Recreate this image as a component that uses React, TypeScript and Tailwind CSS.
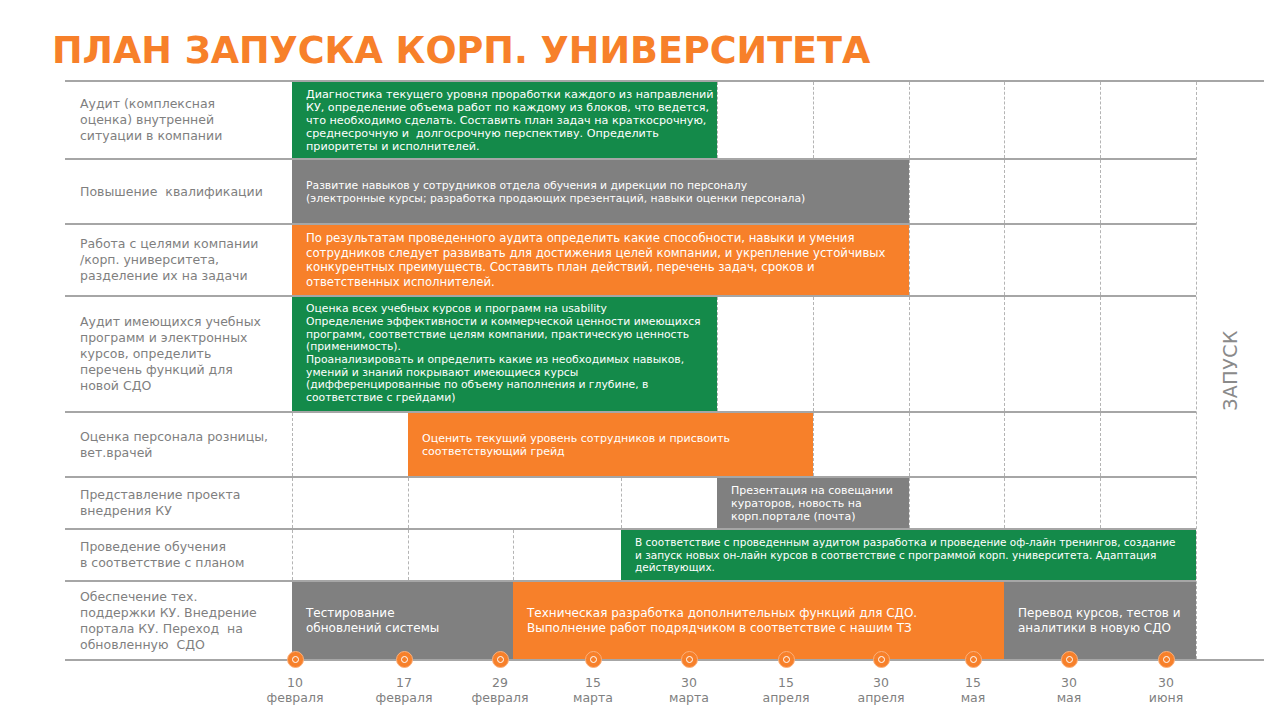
import React from 'react';

type Bar = {
  col: string;
  bg: string;
  text: string[];
  pad: string;
  size: string;
};

type Row = {
  h: string;
  label: string[];
  bars: Bar[];
  skip?: number[];
};

const GREEN = 'bg-[#148a4a]';
const ORANGE = 'bg-[#f7802a]';
const GRAY = 'bg-[#808080]';

const SMALL = 'text-[11px] leading-[13px]';
const MID = 'text-[11.7px] leading-[14.5px]';
const BIG = 'text-[12px] leading-[15px]';

const rows: Row[] = [
  {
    h: 'h-[78px]',
    label: ['Аудит (комплексная', 'оценка) внутренней', 'ситуации в компании'],
    bars: [
      {
        col: 'col-start-1 col-end-5',
        bg: GREEN,
        pad: 'pl-[14px]',
        size: 'text-[11.2px] leading-[13px]',
        text: [
          'Диагностика текущего уровня проработки каждого из направлений',
          'КУ, определение объема работ по каждому из блоков, что ведется,',
          'что необходимо сделать. Составить план задач на краткосрочную,',
          'среднесрочную и  долгосрочную перспективу. Определить',
          'приоритеты и исполнителей.',
        ],
      },
    ],
  },
  {
    h: 'h-[65px]',
    label: ['Повышение  квалификации'],
    bars: [
      {
        col: 'col-start-1 col-end-7',
        bg: GRAY,
        pad: 'pl-[14px]',
        size: 'text-[10.8px] leading-[13px]',
        text: [
          'Развитие навыков у сотрудников отдела обучения и дирекции по персоналу',
          '(электронные курсы; разработка продающих презентаций, навыки оценки персонала)',
        ],
      },
    ],
  },
  {
    h: 'h-[72px]',
    label: ['Работа с целями компании', '/корп. университета,', 'разделение их на задачи'],
    bars: [
      {
        col: 'col-start-1 col-end-7',
        bg: ORANGE,
        pad: 'pl-[14px]',
        size: MID,
        text: [
          'По результатам проведенного аудита определить какие способности, навыки и умения',
          'сотрудников следует развивать для достижения целей компании, и укрепление устойчивых',
          'конкурентных преимуществ. Составить план действий, перечень задач, сроков и',
          'ответственных исполнителей.',
        ],
      },
    ],
  },
  {
    h: 'h-[116px]',
    label: [
      'Аудит имеющихся учебных',
      'программ и электронных',
      'курсов, определить',
      'перечень функций для',
      'новой СДО',
    ],
    bars: [
      {
        col: 'col-start-1 col-end-5',
        bg: GREEN,
        pad: 'pl-[14px]',
        size: 'text-[10.8px] leading-[12.7px]',
        text: [
          'Оценка всех учебных курсов и программ на usability',
          'Определение эффективности и коммерческой ценности имеющихся',
          'программ, соответствие целям компании, практическую ценность',
          '(применимость).',
          'Проанализировать и определить какие из необходимых навыков,',
          'умений и знаний покрывают имеющиеся курсы',
          '(дифференцированные по объему наполнения и глубине, в',
          'соответствие с грейдами)',
        ],
      },
    ],
  },
  {
    h: 'h-[65px]',
    label: ['Оценка персонала розницы,', 'вет.врачей'],
    bars: [
      {
        col: 'col-start-2 col-end-6',
        bg: ORANGE,
        pad: 'pl-[14px]',
        size: SMALL,
        text: ['Оценить текущий уровень сотрудников и присвоить', 'соответствующий грейд'],
      },
    ],
  },
  {
    h: 'h-[52px]',
    label: ['Представление проекта', 'внедрения КУ'],
    skip: [3],
    bars: [
      {
        col: 'col-start-5 col-end-7',
        bg: GRAY,
        pad: 'pl-[14px]',
        size: SMALL,
        text: ['Презентация на совещании', 'кураторов, новость на', 'корп.портале (почта)'],
      },
    ],
  },
  {
    h: 'h-[52px]',
    label: ['Проведение обучения', 'в соответствие с планом'],
    bars: [
      {
        col: 'col-start-4 col-end-10',
        bg: GREEN,
        pad: 'pl-[14px]',
        size: 'text-[10.5px] leading-[12.5px]',
        text: [
          'В соответствие с проведенным аудитом разработка и проведение оф-лайн тренингов, создание',
          'и запуск новых он-лайн курсов в соответствие с программой корп. университета. Адаптация',
          'действующих.',
        ],
      },
    ],
  },
  {
    h: 'h-[79px]',
    label: ['Обеспечение тех.', 'поддержки КУ. Внедрение', 'портала КУ. Переход  на', 'обновленную  СДО'],
    bars: [
      {
        col: 'col-start-1 col-end-3',
        bg: GRAY,
        pad: 'pl-[14px]',
        size: BIG,
        text: ['Тестирование', 'обновлений системы'],
      },
      {
        col: 'col-start-3 col-end-8',
        bg: ORANGE,
        pad: 'pl-[14px]',
        size: BIG,
        text: [
          'Техническая разработка дополнительных функций для СДО.',
          'Выполнение работ подрядчиком в соответствие с нашим ТЗ',
        ],
      },
      {
        col: 'col-start-8 col-end-10',
        bg: GRAY,
        pad: 'pl-[14px]',
        size: BIG,
        text: ['Перевод курсов, тестов и', 'аналитики в новую СДО'],
      },
    ],
  },
];

const cells = [
  'col-start-1',
  'col-start-2',
  'col-start-3',
  'col-start-4',
  'col-start-5',
  'col-start-6',
  'col-start-7',
  'col-start-8',
  'col-start-9',
];

const dates = [
  { ml: 'ml-[260px]', day: '10', month: 'февраля' },
  { ml: 'ml-[39px]', day: '17', month: 'февраля' },
  { ml: 'ml-[26px]', day: '29', month: 'февраля' },
  { ml: 'ml-[23px]', day: '15', month: 'марта' },
  { ml: 'ml-[26px]', day: '30', month: 'марта' },
  { ml: 'ml-[27px]', day: '15', month: 'апреля' },
  { ml: 'ml-[25px]', day: '30', month: 'апреля' },
  { ml: 'ml-[22px]', day: '15', month: 'мая' },
  { ml: 'ml-[26px]', day: '30', month: 'мая' },
  { ml: 'ml-[27px]', day: '30', month: 'июня' },
];

export default function App() {
  return (
    <div className="w-[1280px] h-[720px] bg-white overflow-hidden font-['DejaVu_Sans',sans-serif]">
      {/* Title */}
      <div className="h-[80px] pt-[33px] pl-[52px]">
        <h1 className="text-[36.6px] leading-none font-bold text-[#f7802a] whitespace-nowrap">
          ПЛАН ЗАПУСКА КОРП. УНИВЕРСИТЕТА
        </h1>
      </div>

      {/* Plan table */}
      <div className="ml-[65px] w-[1199px] flex border-t-2 border-[#a6a6a6]">
        <div className="w-[1131px]">
          {rows.map((row, i) => (
            <div key={i} className={`flex border-b-2 border-[#a6a6a6] ${row.h}`}>
              <div className="w-[227px] shrink-0 flex flex-col justify-center pl-[15px] text-[12.5px] leading-[16px] text-[#7f7f7f] whitespace-pre">
                {row.label.map((l, j) => (
                  <span key={j}>{l}</span>
                ))}
              </div>
              <div className="w-[904px] grid grid-cols-[116px_105px_108px_96px_96px_96px_95px_96px_96px] grid-rows-1">
                {cells.map((c, j) => (
                  <div
                    key={j}
                    className={`${c} row-start-1 ${
                      row.skip?.includes(j + 1) ? '' : 'border-l border-dashed border-[#b4b4b4]'
                    }`}
                  />
                ))}
                {row.bars.map((b, j) => (
                  <div
                    key={'b' + j}
                    className={`${b.col} row-start-1 ${b.bg} ${b.pad} ${b.size} flex flex-col justify-center text-white whitespace-pre overflow-hidden`}
                  >
                    {b.text.map((t, k) => (
                      <span key={k}>{t}</span>
                    ))}
                  </div>
                ))}
              </div>
            </div>
          ))}
        </div>
        {/* Launch column */}
        <div className="w-[68px] border-b-2 border-[#a6a6a6]">
          <div className="h-full flex items-center justify-center border-l border-dashed border-[#b4b4b4]">
            <span className="[writing-mode:vertical-rl] rotate-180 text-[19px] tracking-[0.5px] text-[#8a8a8a]">
              ЗАПУСК
            </span>
          </div>
        </div>
      </div>

      {/* Timeline markers */}
      <div className="flex -mt-[10px]">
        {dates.map((d, i) => (
          <div key={i} className={`${d.ml} w-[70px] shrink-0 flex flex-col items-center`}>
            <div className="w-[17px] h-[17px] rounded-full bg-[#f7802a] border border-[#fbb07c] flex items-center justify-center">
              <div className="w-[7px] h-[7px] rounded-full border-[1.5px] border-white" />
            </div>
            <div className="mt-[7px] text-[12.5px] leading-[15px] text-[#7f7f7f] text-center">
              <div>{d.day}</div>
              <div>{d.month}</div>
            </div>
          </div>
        ))}
      </div>
    </div>
  );
}
